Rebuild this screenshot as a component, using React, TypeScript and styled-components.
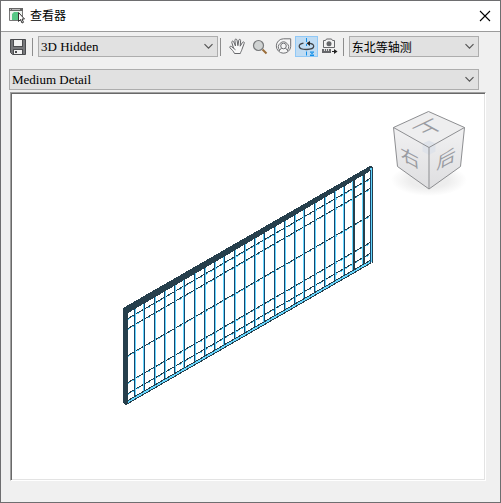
import React from "react";
import styled, { createGlobalStyle, css } from "styled-components";

const GlobalStyle = createGlobalStyle`
  *, *::before, *::after { box-sizing: border-box; }
  body { margin: 0; background: #f0f0f0; }
`;

const Window = styled.main`
  display: flex;
  flex-direction: column;
  min-height: 100vh;
  border: 1px solid #6e6e70;
  background: #f0f0f0;
  color: #000;
  font-family: "Liberation Sans", "Noto Sans CJK SC", sans-serif;
  font-size: 12px;
`;

const TitleBar = styled.header`
  display: flex;
  align-items: center;
  gap: 4px;
  height: 31px;
  padding: 0 7px 0 8px;
  background: #fff;
  border-bottom: 1px solid #9b9b9b;
`;

const Title = styled.h1`
  flex: 1;
  margin: 0;
  font-size: 12px;
  font-weight: 400;
  line-height: 16px;
`;

const CloseButton = styled.button`
  display: flex;
  align-items: center;
  justify-content: center;
  width: 16px;
  height: 16px;
  padding: 0;
  border: 0;
  background: none;
`;

const Toolbar = styled.div`
  display: flex;
  align-items: center;
  padding: 4px 21px 0 8px;
`;

const DetailRow = styled.div`
  display: flex;
  padding: 12px 21px 0 8px;
`;

const ToolButton = styled.button<{ $active?: boolean }>`
  display: flex;
  flex: none;
  align-items: center;
  justify-content: center;
  width: 23px;
  height: 21px;
  padding: 0;
  border: 1px solid transparent;
  background: none;
  ${(p) =>
    p.$active &&
    css`
      border-color: #90c8f6;
      background: #c0dcf3;
    `}
`;

const SaveButton = styled(ToolButton)`
  width: 18px;
`;

const ToolGroup = styled.div`
  display: flex;
  flex: none;
  margin: 0 2px 0 5px;
`;

const Separator = styled.span`
  flex: none;
  width: 1px;
  height: 18px;
  margin: 0 5px;
  background: #8d8d8d;
`;

const GroupStart = styled(Separator)`
  margin: 0 0 0 2px;
`;

const GroupEnd = styled(Separator)`
  margin: 0 5px 0 0;
`;

const ComboBox = styled.div<{ $grow: number }>`
  display: grid;
  flex: ${(p) => p.$grow} 1 0;
  align-items: center;
  min-width: 0;
  height: 21px;
  border: 1px solid #adadad;
  background: #e1e1e1;

  > * {
    grid-area: 1 / 1;
  }

  > svg {
    justify-self: end;
    margin-right: 3px;
    pointer-events: none;
  }
`;

const Select = styled.select<{ $cjk?: boolean }>`
  width: 100%;
  height: 19px;
  padding: 0 20px 0 2px;
  border: 0;
  outline: 0;
  appearance: none;
  background: none;
  color: #000;
  font-family: ${(p) => (p.$cjk ? '"Noto Sans CJK SC", sans-serif' : '"Liberation Serif", serif')};
  font-size: ${(p) => (p.$cjk ? 12 : 13)}px;
`;

const Viewport = styled.section`
  position: relative;
  display: flex;
  flex: 1;
  align-items: center;
  justify-content: center;
  margin: 2px 14px 21px 9px;
  border: 1px solid;
  border-color: #a0a0a0 #fff #fff #a0a0a0;
  background: #fff;
  box-shadow: inset 1px 1px #696969, inset -1px -1px #e3e3e3;
`;

const ViewCube = styled.svg`
  position: absolute;
  top: 12px;
  right: 14px;
`;

const Chevron = () => (
  <svg width="11" height="7" viewBox="0 0 11 7" aria-hidden="true">
    <path d="M1.5 1.2 5.5 5.2 9.5 1.2" fill="none" stroke="#555" strokeWidth="1.2" />
  </svg>
);

type ComboProps = { label: string; options: string[]; grow?: number; cjk?: boolean };

const Combo = ({ label, options, grow = 1, cjk }: ComboProps) => (
  <ComboBox $grow={grow}>
    <Select aria-label={label} $cjk={cjk}>
      {options.map((o) => (
        <option key={o}>{o}</option>
      ))}
    </Select>
    <Chevron />
  </ComboBox>
);

const AppIcon = () => (
  <svg width="17" height="17" viewBox="0 0 17 17" aria-hidden="true">
    <path d="M.5.5h13v12H.5z" fill="#eef3f0" stroke="#777" />
    <path d="M0 0h14v3H0z" fill="#666" />
    <path d="M1 1h1v1H1zM3 1h8v1H3z" fill="#bbb" />
    <path d="M3 6l2-2h4v8H3z" fill="#56c786" />
    <path d="M9.5 4.5v9l2-2 1.5 3.5 1.5-.7-1.5-3.3h2.5z" fill="#fff" stroke="#333" />
  </svg>
);

const SaveIcon = () => (
  <svg width="16" height="16" viewBox="0 0 16 16" aria-hidden="true">
    <path d="M.5.5h15v15h-13l-2-2z" fill="#77787b" stroke="#4b4c4f" />
    <path d="M3 0h10v8H3z" fill="#4b4c4f" />
    <path d="M4 1h8v6H4z" fill="#f2f2f2" />
    <path d="M3 10h10v6H3z" fill="#4b4c4f" />
    <path d="M4 11h8v4H4z" fill="#f2f2f2" />
    <path d="M5 12h2v2H5z" fill="#4b4c4f" />
  </svg>
);

const HandIcon = () => (
  <svg width="17" height="17" viewBox="0 0 17 17" aria-hidden="true">
    <path
      d="M5.5 15.5C4.5 13 2.5 11.5 1 9.8.2 8.5 1.5 7.8 2.6 8.6L4.6 10.3 2.8 4.5C2.5 3 4.1 2.5 4.7 3.8L6.5 8 5.9 2.2C5.9.7 7.7.7 8 2.1L8.9 7.7 9.8 2.2C10.2.8 11.8 1.2 11.6 2.6L11.2 8.2 13.5 4.4C14.3 3.3 15.7 4 15.2 5.3L12.9 11.5C12.4 13.4 11.6 14 11.3 15.5Z"
      fill="#f8f8f8"
      stroke="#66676a"
      strokeLinejoin="round"
    />
    <path d="M4.6 10.3 6.5 11.8" stroke="#66676a" />
  </svg>
);

const ZoomIcon = () => (
  <svg width="16" height="16" viewBox="0 0 16 16" aria-hidden="true">
    <path d="M10.5 10.5 14.5 14.5" stroke="#9a6c38" strokeWidth="2" />
    <circle cx="6.5" cy="6.5" r="5" fill="#cfd2d2" stroke="#77797b" strokeWidth="1.2" />
  </svg>
);

const WheelIcon = () => (
  <svg width="17" height="17" viewBox="0 0 17 17" fill="none" stroke="#707174" aria-hidden="true">
    <path d="M8.5.8h7.2v7.7a7.2 7.2 0 1 1-7.2-7.700Z" fill="#f5f5f5" />
    <circle cx="8.5" cy="8" r="2.8" />
    <path d="M4.500 12A5 5 0 1 1 12.500 12M6.500 10 4 13M10.500 10 13 13" />
  </svg>
);

const OrbitIcon = () => (
  <svg width="17" height="18" viewBox="0 0 17 18" fill="none" aria-hidden="true">
    <path d="M8.5 0v4M8.5 6v2M8.5 13.500v4" stroke="#128fe8" />
    <path d="M5.5 5.2C2.5 5.700 1.200 6.800 1.200 8.300c0 1.900 3.200 3.200 7.300 3.200s7.200-1.300 7.200-3.200c0-1.500-2-2.700-4.700-3.100" stroke="#404449" strokeWidth="1.3" />
    <path d="M8.5 5.3 12 3v5z" fill="#222" />
    <path d="M12 14h4M12 17.5h4M12.5 14l3 3M15.5 14l-3 3" stroke="#128fe8" />
  </svg>
);

const CameraIcon = () => (
  <svg width="17" height="17" viewBox="0 0 17 17" aria-hidden="true">
    <path d="M2.5 2.5h2l1-1.5h5l1 1.5h2v7h-11z" fill="#f2f2f2" stroke="#66676a" />
    <circle cx="8" cy="5.7" r="2.5" fill="#66676a" />
    <path d="M1 11h9v4H1z" fill="#66676a" />
    <path d="M3.5 11v2M5.5 11v2M7.5 11v2" stroke="#ddd" />
    <path d="M11 13.5h3" stroke="#222" />
    <path d="M13 11l3.5 2.5L13 16z" fill="#222" />
  </svg>
);

const CloseIcon = () => (
  <svg width="12" height="12" viewBox="0 0 12 12" aria-hidden="true">
    <path d="M1 1 11 11M11 1 1 11" stroke="#000" strokeWidth="1.1" />
  </svg>
);

const DARK = "#263f4c";
const INK = "#17466b";
const GLOW = "#64d6ff";
const LEFT = 127;
const RIGHT = 371;
const FALL = 141;

const RAILS = [319, 329, 356, 383, 394];
const BARS = Array.from({ length: 22 }, (_, i) => 134 + i * 10);
const slope = (x: number) => Math.round(((x - LEFT) * FALL) / (RIGHT - LEFT));

const FenceModel = () => (
  <svg width="252" height="243" viewBox="122 165 252 243" role="img" aria-label="3D model" shapeRendering="crispEdges">
    {RAILS.map((y) => (
      <g key={y}>
        <path d={`M${LEFT} ${y + 1}L${RIGHT} ${y + 1 - FALL}`} stroke={GLOW} strokeDasharray="3 3" />
        <path d={`M${LEFT} ${y}L${RIGHT} ${y - FALL}`} stroke={DARK} />
      </g>
    ))}
    {BARS.map((x, i) => (
      <g key={x}>
        <rect x={i % 4 === 1 ? x - 1 : x + 1} y={310 - slope(x)} width="1" height="92" fill={GLOW} />
        <rect x={x} y={310 - slope(x)} width="1" height="92" fill={INK} />
      </g>
    ))}
    {[354, 364].map((x) => (
      <g key={x}>
        <rect x={x - 2} y={310 - slope(x)} width="1" height="92" fill={GLOW} />
        <rect x={x - 1} y={310 - slope(x)} width="2" height="92" fill={DARK} />
      </g>
    ))}
    <path d={`M${LEFT} 402.5L${RIGHT} ${402.5 - FALL}`} stroke={GLOW} strokeWidth="2" />
    <path d={`M${LEFT} 401L${RIGHT} ${401 - FALL}M${LEFT} 404L${RIGHT} ${404 - FALL}`} stroke={DARK} />
    <rect x="371" y="168" width="1" height="94" fill={GLOW} />
    <rect x="372" y="167" width="1" height="96" fill={DARK} />
    <rect x="370" y="169" width="1" height="94" fill={INK} />
    <path d="M123 308 370 166 373 167 372 170 128 313V404L126 405 123 403Z" fill={DARK} />
    <path d="M370 168h2v2h-2z" fill={GLOW} />
  </svg>
);

const OrientationCube = () => (
  <ViewCube width="86" height="95" viewBox="385 105 86 95" role="img" aria-label="ViewCube">
    <defs>
      <linearGradient id="side" x1="0" y1="0" x2="0" y2="1">
        <stop offset="0" stopColor="#f1f1f2" />
        <stop offset="1" stopColor="#dedee0" />
      </linearGradient>
      <radialGradient id="shade">
        <stop offset="0.5" stopColor="#ededed" />
        <stop offset="1" stopColor="#fff" />
      </radialGradient>
    </defs>
    <ellipse cx="429" cy="180" rx="38" ry="16" fill="url(#shade)" />
    <path d="M393.5 127.5 429 147.5V189L397.5 166.5Z" fill="url(#side)" />
    <path d="M464.5 127.5 429 147.5V189L460.5 166.5Z" fill="url(#side)" />
    <path d="M393.5 127.5 428.5 111.5 464.5 127.5 429 147.5Z" fill="#eeeeef" />
    <path d="M422.5 143.5 429 140.5 435.5 143.5V151.5L429 155 422.5 151.5Z" fill="#dfe3ea" />
    <g fill="none" stroke="#8d8e91">
      <path d="M393.5 127.5 428.5 111.5 464.5 127.5 429 147.5ZM429 147.5V189" />
      <path d="M393.5 127.5 397.5 166.5 429 189 460.5 166.5 464.5 127.5" />
    </g>
    <g fill="#9a9ca2" fontFamily='"Noto Sans CJK SC", sans-serif' fontSize="20" textAnchor="middle">
      <text y="7" transform="matrix(-1.15 .55 -.9 -.5 429 127)">上</text>
      <text y="7" transform="matrix(.95 .5 .08 .85 410 158)">右</text>
      <text y="7" transform="matrix(.95 -.5 -.08 .85 446 159)">后</text>
    </g>
  </ViewCube>
);

export default function App() {
  return (
    <>
      <GlobalStyle />
      <Window>
        <TitleBar>
          <AppIcon />
          <Title>查看器</Title>
          <CloseButton aria-label="Close">
            <CloseIcon />
          </CloseButton>
        </TitleBar>
        <Toolbar>
          <SaveButton aria-label="Save">
            <SaveIcon />
          </SaveButton>
          <Separator />
          <Combo label="Display mode" options={["3D Hidden"]} grow={18} />
          <GroupStart />
          <ToolGroup>
            <ToolButton aria-label="Pan"><HandIcon /></ToolButton>
            <ToolButton aria-label="Zoom"><ZoomIcon /></ToolButton>
            <ToolButton aria-label="Steering wheel"><WheelIcon /></ToolButton>
            <ToolButton aria-label="Orbit" $active><OrbitIcon /></ToolButton>
            <ToolButton aria-label="Named camera"><CameraIcon /></ToolButton>
          </ToolGroup>
          <GroupEnd />
          <Combo label="View direction" options={["东北等轴测"]} grow={13} cjk />
        </Toolbar>
        <DetailRow>
          <Combo label="Detail level" options={["Medium Detail"]} />
        </DetailRow>
        <Viewport>
          <FenceModel />
          <OrientationCube />
        </Viewport>
      </Window>
    </>
  );
}
